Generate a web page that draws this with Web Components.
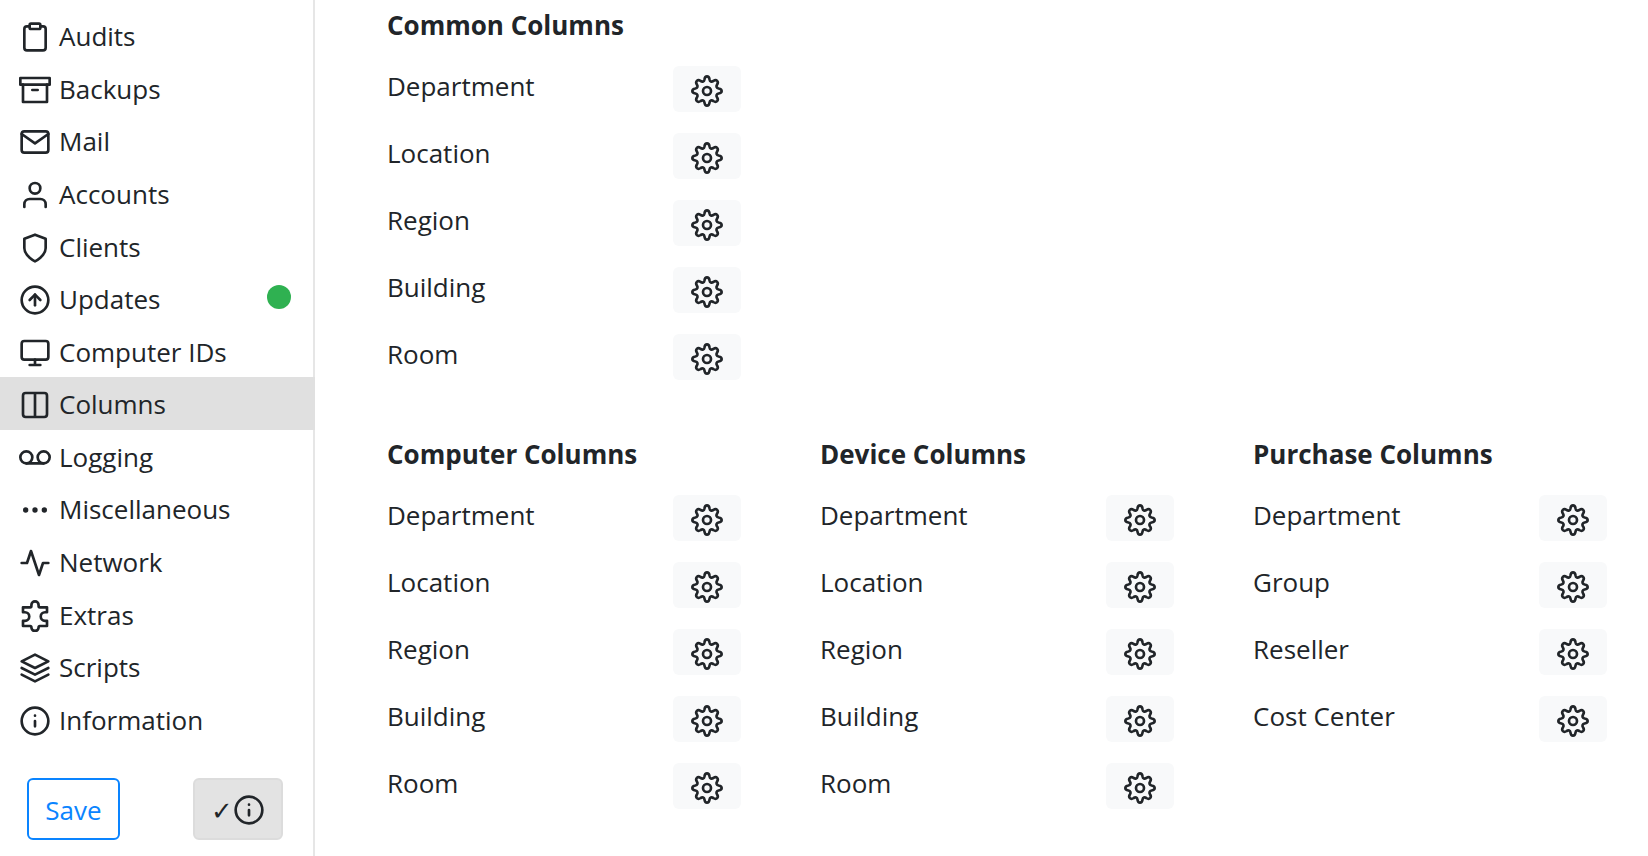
<!DOCTYPE html>
<html lang="en">
<head>
<meta charset="utf-8">
<title>Settings – Columns</title>
<style>
  html, body { margin: 0; background: #fff; }
  body { font-family: "Open Sans", "Segoe UI", sans-serif; font-size: 26px; line-height: 40px; color: #212529; }
</style>
</head>
<body>
<settings-page></settings-page>
<script>
const ICONS = {
  clipboard: '<path d="M16 4h2a2 2 0 0 1 2 2v14a2 2 0 0 1-2 2H6a2 2 0 0 1-2-2V6a2 2 0 0 1 2-2h2"/><rect x="8" y="2" width="8" height="4" rx="1"/>',
  archive: '<path d="M21 8v13H3V8"/><path d="M1 3h22v5H1z"/><path d="M10 12h4"/>',
  mail: '<path d="M4 4h16c1.100 0 2 .9 2 2v12c0 1.100-.9 2-2 2H4c-1.100 0-2-.9-2-2V6c0-1.100.9-2 2-2z"/><path d="M22 6l-10 7L2 6"/>',
  user: '<path d="M20 21v-2a4 4 0 0 0-4-4H8a4 4 0 0 0-4 4v2"/><circle cx="12" cy="7" r="4"/>',
  shield: '<path d="M12 22s8-4 8-10V5l-8-3-8 3v7c0 6 8 10 8 10z"/>',
  upload: '<circle cx="12" cy="12" r="10"/><path d="M16 12l-4-4-4 4"/><path d="M12 16V8"/>',
  monitor: '<rect x="2" y="3" width="20" height="14" rx="2"/><path d="M8 21h8M12 17v4"/>',
  columns: '<path d="M12 3h7a2 2 0 0 1 2 2v14a2 2 0 0 1-2 2h-7m0-18H5a2 2 0 0 0-2 2v14a2 2 0 0 0 2 2h7m0-18v18"/>',
  voicemail: '<circle cx="5.500" cy="11.500" r="4.500"/><circle cx="18.500" cy="11.500" r="4.500"/><path d="M5.500 16h13"/>',
  more: '<circle cx="12" cy="12" r="1"/><circle cx="19" cy="12" r="1"/><circle cx="5" cy="12" r="1"/>',
  activity: '<path d="M22 12h-4l-3 9L9 3l-3 9H2"/>',
  puzzle: '<path d="M3 5.500h5.300q1 0 1-1V3.700a2.700 2.700 0 0 1 5.400 0v.8q0 1 1 1H21v3.700h-1.500a3.200 3.200 0 0 0 0 6.400H21v3.900h-5.300q-1 0-1 1v.2a2.700 2.500 0 0 1-5.400 0v-.2q0-1-1-1H3v-3.900h1.500a3.200 3.200 0 0 0 0-6.400H3z"/>',
  layers: '<path d="M12 2L2 7l10 5 10-5-10-5z"/><path d="M2 17l10 5 10-5"/><path d="M2 12l10 5 10-5"/>',
  info: '<circle cx="12" cy="12" r="10"/><path d="M12 16v-4M12 8h.01"/>',
  gear: '<circle cx="12" cy="12" r="3"/><path d="M12 1c1.500 0 1.700 1 1.900 2.300.3 1.600 1.500 2 2.800 1.200 1.200-.8 2-1 2.900-.1s.7 1.700-.1 2.900c-.8 1.300-.4 2.500 1.200 2.800C22 10.300 23 10.500 23 12s-1 1.700-2.300 1.900c-1.600.3-2 1.500-1.200 2.800.8 1.200 1 2 .1 2.900s-1.700.7-2.900-.1c-1.300-.8-2.500-.4-2.800 1.200C13.700 22 13.500 23 12 23s-1.700-1-1.900-2.300c-.3-1.600-1.500-2-2.800-1.200-1.200.8-2 1-2.900.1s-.7-1.700.1-2.900c.8-1.300.4-2.500-1.200-2.800C2 13.700 1 13.500 1 12s1-1.700 2.300-1.900c1.600-.3 2-1.500 1.200-2.800-.8-1.200-1-2-.1-2.900s1.700-.7 2.900.1c1.300.8 2.500.4 2.800-1.200C10.300 2 10.500 1 12 1z"/>'
};

function define(name, render) {
  customElements.define(name, class extends HTMLElement {
    connectedCallback() {
      if (this.shadowRoot) return;
      this.attachShadow({ mode: 'open' }).innerHTML = render(this);
    }
  });
}

define('ui-icon', el => `
  <style>
    :host { display: block; flex: none; width: 32px; height: 32px; }
    svg { display: block; width: 100%; height: 100%; fill: none; stroke: currentColor; stroke-width: 2; stroke-linecap: round; stroke-linejoin: round; }
  </style>
  <svg viewBox="0 0 24 24" aria-hidden="true">${ICONS[el.getAttribute('name')]}</svg>`);

define('nav-item', el => `
  <style>
    :host { display: flex; flex: 1 0 40px; }
    a { flex: 1; display: flex; align-items: center; gap: 8px; padding: 2px 22px 0 19px; color: inherit; text-decoration: none; }
    :host([active]) { margin-right: -2px; background: #e0e0e0; }
    .label { flex: 1; white-space: nowrap; }
    .dot { width: 24px; height: 24px; border-radius: 50%; background: #2fb151; margin-bottom: 4px; }
    ui-icon { padding-top: 2px; }
  </style>
  <a href="#"><ui-icon name="${el.getAttribute('icon')}"></ui-icon><span class="label"><slot></slot></span>${el.hasAttribute('dot') ? '<span class="dot"></span>' : ''}</a>`);

define('side-bar', () => `
  <style>
    :host { display: flex; flex-direction: column; box-sizing: border-box; width: 315px; min-height: 100vh; border-right: 2px solid #e6e6e6; }
    nav { flex: 1; display: flex; flex-direction: column; padding-top: 9px; }
    footer { display: flex; justify-content: space-between; padding: 33px 30px 16px 27px; }
    button { box-sizing: border-box; height: 62px; padding: 2px 16px 0; display: flex; align-items: center; justify-content: center; font: inherit; border-radius: 6px; border: 2px solid; }
    .save { min-width: 93px; color: #0a84ff; background: #fff; border-color: #0a84ff; }
    .check { min-width: 89px; color: inherit; background: #e3e3e3; border-color: #dcdcdc; }
  </style>
  <nav aria-label="Settings">
    <nav-item icon="clipboard">Audits</nav-item>
    <nav-item icon="archive">Backups</nav-item>
    <nav-item icon="mail">Mail</nav-item>
    <nav-item icon="user">Accounts</nav-item>
    <nav-item icon="shield">Clients</nav-item>
    <nav-item icon="upload" dot>Updates</nav-item>
    <nav-item icon="monitor">Computer IDs</nav-item>
    <nav-item icon="columns" active>Columns</nav-item>
    <nav-item icon="voicemail">Logging</nav-item>
    <nav-item icon="more">Miscellaneous</nav-item>
    <nav-item icon="activity">Network</nav-item>
    <nav-item icon="puzzle">Extras</nav-item>
    <nav-item icon="layers">Scripts</nav-item>
    <nav-item icon="info">Information</nav-item>
  </nav>
  <footer>
    <button class="save" type="button">Save</button>
    <button class="check" type="button">✓<ui-icon name="info"></ui-icon></button>
  </footer>`);

define('column-row', () => `
  <style>
    :host { display: flex; justify-content: space-between; align-items: flex-start; height: 46px; }
    button { box-sizing: border-box; width: 68px; height: 46px; padding: 4px 0 0; border: 0; border-radius: 6px; background: #f8f9fa; color: inherit; display: flex; align-items: center; justify-content: center; }
  </style>
  <span id="name"><slot></slot></span>
  <button type="button" aria-labelledby="name"><ui-icon name="gear"></ui-icon></button>`);

define('column-group', el => `
  <style>
    :host { display: block; }
    h2 { margin: 0 0 21px; font-size: inherit; line-height: inherit; font-weight: 700; white-space: nowrap; }
    .rows { display: flex; flex-direction: column; gap: 21px; }
  </style>
  <h2>${el.getAttribute('heading')}</h2>
  <div class="rows"><slot></slot></div>`);

define('settings-page', () => {
  const group = (heading, names) => `<column-group heading="${heading}">${names.map(n => `<column-row>${n}</column-row>`).join('')}</column-group>`;
  const places = ['Department', 'Location', 'Region', 'Building', 'Room'];
  return `
  <style>
    :host { display: flex; min-height: 100vh; }
    main { flex: 1; display: grid; grid-template-columns: repeat(3, 1fr); column-gap: 79px; row-gap: 54px; align-content: start; padding: 5px 41px 0 72px; }
    column-group:first-of-type, column-group:nth-of-type(2) { grid-column: 1; }
  </style>
  <side-bar></side-bar>
  <main>
    ${group('Common Columns', places)}
    ${group('Computer Columns', places)}
    ${group('Device Columns', places)}
    ${group('Purchase Columns', ['Department', 'Group', 'Reseller', 'Cost Center'])}
  </main>`;
});
</script>
</body>
</html>
